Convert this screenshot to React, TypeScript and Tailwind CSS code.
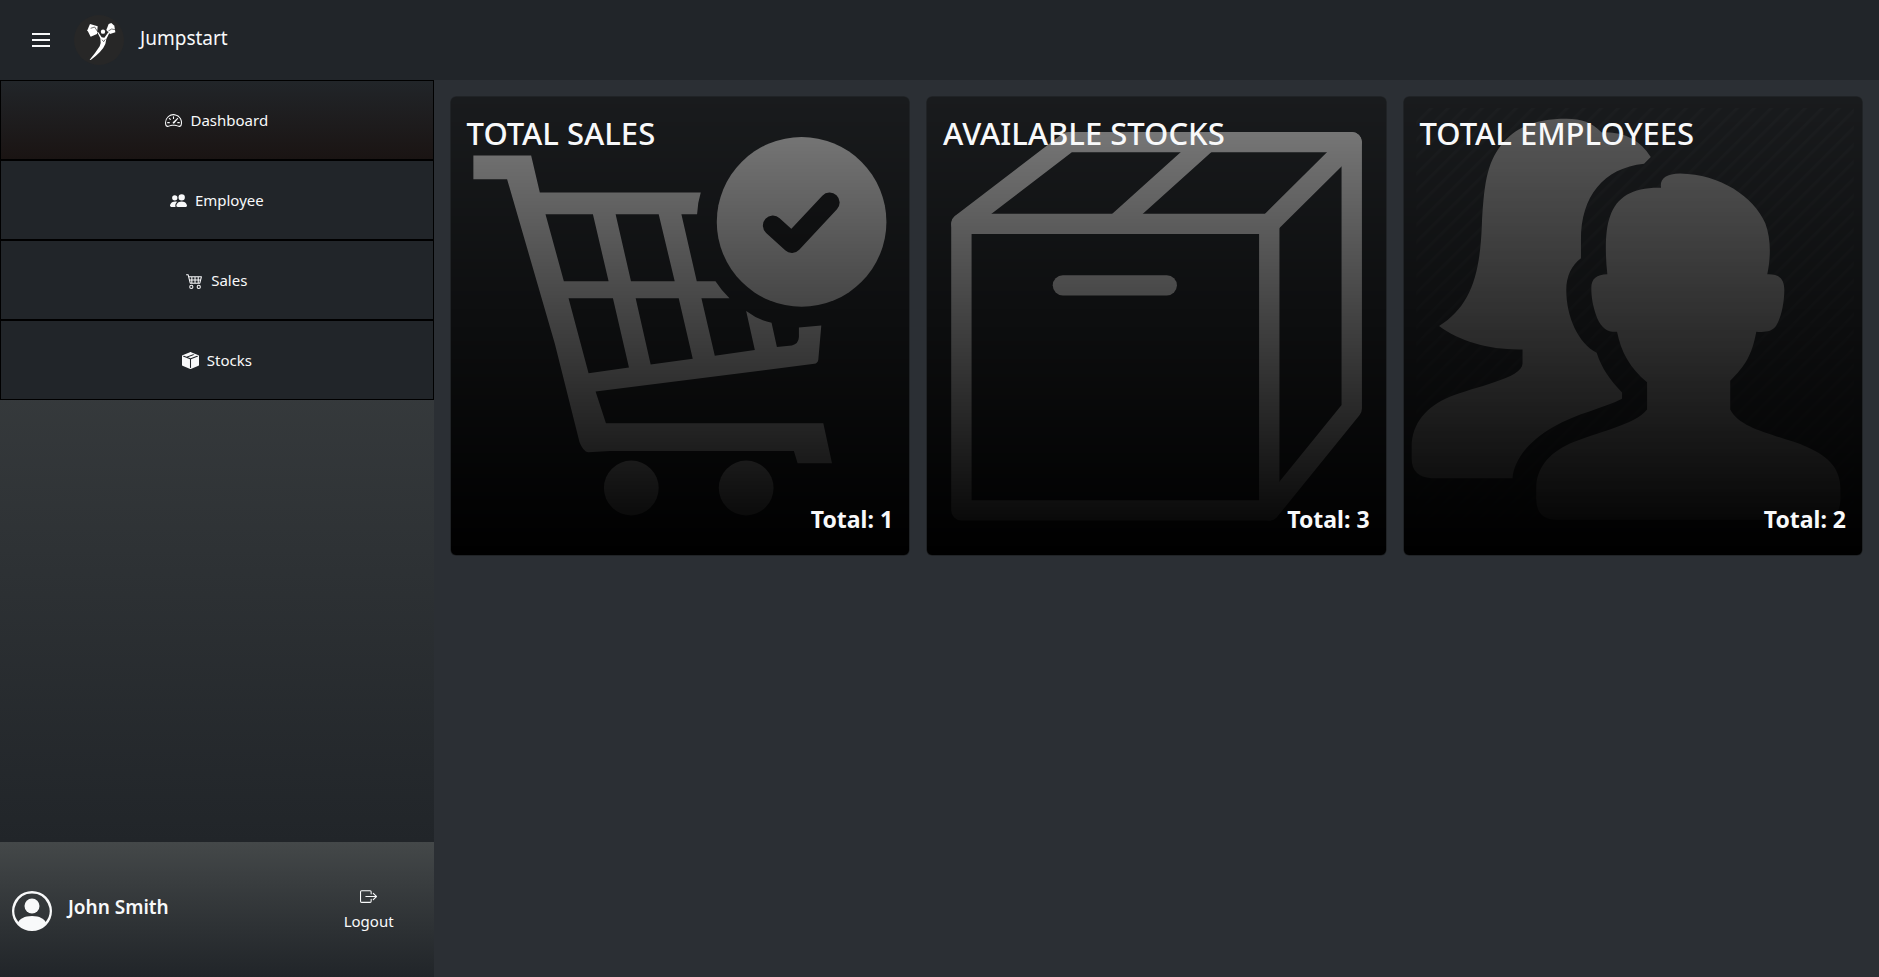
import type { ComponentType, ReactNode } from "react";
import {
  BsBoxArrowRight,
  BsBoxSeamFill,
  BsCart4,
  BsPeopleFill,
  BsPersonCircle,
  BsSpeedometer2,
} from "react-icons/bs";

type IconType = ComponentType<{ className?: string }>;

const navItems: { label: string; Icon: IconType; active?: boolean }[] = [
  { label: "Dashboard", Icon: BsSpeedometer2, active: true },
  { label: "Employee", Icon: BsPeopleFill },
  { label: "Sales", Icon: BsCart4 },
  { label: "Stocks", Icon: BsBoxSeamFill },
];

function Logo() {
  return (
    <svg viewBox="0 0 150 150" className="size-[50px] shrink-0" aria-hidden="true">
      <circle cx="75" cy="75" r="75" fill="#272727" />
      <g fill="#ffffff">
        <path d="M48 27 L71 34 L69 57 L50 65 L40 46 Z" />
        <path d="M104 27 L112 24 L121 32 L124 52 L108 57 L97 45 Z" />
        <circle cx="87" cy="50" r="6.500" />
        <path d="M69 50 L73 52 L83 67 L91 68 L103 52 L106 54 L97 72 L94 87 Q86 108 50 135 L47 134 Q66 112 77 94 Q82 84 79 70 Z" />
      </g>
      <path
        d="M50 40 L62 36 L71 50 M103 48 L113 42 L123 44 M84 74 L89 80 L94 73"
        fill="none"
        stroke="#272727"
        strokeWidth="2"
      />
    </svg>
  );
}

function CartArt() {
  return (
    <svg viewBox="31 48 1379 1379" className="size-full" aria-hidden="true">
      <path
        fill="#ffffff"
        fillRule="evenodd"
        d="M101 226 H274 L300 337 H782 Q772 370 771 402 H724 L770 603 H826 Q845 632 868 654 H784 L824 826 L944 809 L918 692 Q955 720 994 727 L1010 800 L1055 795 Q1075 791 1076 770 V741 L1143 735 L1134 838 Q1132 849 1122 850 L467 933 L498 1028 H1149 L1175 1148 H1072 L1061 1111 H510 L445 1115 Q430 1113 419 1085 L345 790 L202 297 H101 Z M317 402 H459 L506 603 H372 Z M527 402 H656 L704 603 H573 Z M386 654 H519 L567 861 L446 878 Z M587 654 H716 L758 835 L632 852 Z"
      />
      <circle cx="574" cy="1222" r="82" fill="#ffffff" />
      <circle cx="918" cy="1222" r="82" fill="#ffffff" />
      <circle cx="1084" cy="425" r="254" fill="#ffffff" />
      <path
        d="M998 436 L1055 488 L1168 367"
        fill="none"
        stroke="#2a2c2f"
        strokeWidth="60"
        strokeLinecap="round"
        strokeLinejoin="round"
      />
    </svg>
  );
}

function BoxArt() {
  return (
    <svg viewBox="35 49 1379 1379" className="size-full" aria-hidden="true">
      <g fill="none" stroke="#ffffff" strokeWidth="61" strokeLinejoin="round" strokeLinecap="round">
        <path d="M141 432 H1063 V1290 H141 Z" />
        <path d="M141 432 L461 187 H1310 V985 L1063 1290" />
        <path d="M1063 432 L1310 187" />
        <path d="M605 432 L877 187" />
        <path d="M445 616 H756" />
      </g>
    </svg>
  );
}

function PeopleArt() {
  return (
    <svg viewBox="40 49 1379 1379" className="size-full" aria-hidden="true">
      <defs>
        <pattern id="stripes" width="36" height="36" patternUnits="userSpaceOnUse" patternTransform="rotate(45)">
          <rect width="9" height="36" fill="#ffffff" fillOpacity="0.035" />
        </pattern>
      </defs>
      <rect x="80" y="85" width="1310" height="1245" fill="url(#stripes)" />
      <path
        d="M148 738 C240 680 270 590 276 440 C282 320 290 250 335 195 C380 140 440 117 530 117 C575 117 605 128 635 158 C700 155 750 180 782 232 L762 252 C640 265 573 350 573 480 V535 C545 555 529 590 529 630 C529 710 565 790 620 818 C635 865 660 900 696 937 V956 C640 985 560 1000 490 1040 C415 1083 372 1140 368 1194 H125 Q66 1190 66 1135 V1100 C66 1030 110 980 180 950 C250 920 398 895 398 850 V808 C300 810 210 785 148 738 Z"
        fill="#b7b7b7"
      />
      <path
        d="M813 324 C808 300 825 281 870 281 C990 283 1090 350 1125 430 C1142 475 1142 530 1131 583 C1165 582 1182 595 1182 630 C1182 670 1172 715 1157 738 C1145 755 1125 757 1098 755 C1085 825 1065 857 1020 902 V988 C1050 1050 1170 1065 1250 1100 C1320 1130 1350 1170 1350 1225 V1260 Q1348 1318 1290 1318 H500 Q439 1318 439 1255 V1225 C439 1165 475 1120 540 1090 C620 1055 735 1035 771 988 V906 C720 865 693 815 681 755 C655 757 635 745 622 715 C608 680 604 650 604 625 C604 595 620 584 652 583 C645 520 645 450 660 410 C680 350 730 322 813 324 Z"
        fill="#b7b7b7"
      />
    </svg>
  );
}

function StatCard({ title, total, art }: { title: string; total: number; art: ReactNode }) {
  return (
    <article className="relative isolate flex aspect-square flex-col justify-between overflow-hidden rounded-md bg-[#32363a] p-[17px] text-[#f8f9fa]">
      <div className="absolute inset-0 -z-10">{art}</div>
      <div className="absolute inset-0 -z-10 rounded-md border border-[#202326] bg-linear-to-b from-black/50 to-black" />
      <h2 className="text-[31px] leading-10 font-medium">{title}</h2>
      <p className="text-right text-[23px] leading-10 font-bold">Total: {total}</p>
    </article>
  );
}

export default function App() {
  return (
    <div className="flex min-h-screen flex-col bg-[#2b2f34] font-['Noto_Sans','Open_Sans',sans-serif] text-[15px] leading-6 text-[#f8f9fa]">
      <header className="flex h-20 items-center bg-[#212529] pl-8">
        <button type="button" aria-label="Toggle menu">
          <svg viewBox="0 0 18 14" className="h-[14px] w-[18px]" aria-hidden="true">
            <path d="M0 1 H18 M0 7 H18 M0 13 H18" stroke="#f8f9fa" strokeWidth="2" />
          </svg>
        </button>
        <a href="#" className="ml-6 flex items-center gap-4">
          <Logo />
          <span className="pb-1 text-[19px]">Jumpstart</span>
        </a>
      </header>
      <div className="grid flex-1 grid-cols-[3fr_10fr]">
        <aside className="flex flex-col">
          <nav className="flex-1 bg-linear-to-b from-[#444849] to-[#212529]">
            {navItems.map(({ label, Icon, active }) => (
              <a
                key={label}
                href="#"
                className={
                  active
                    ? "flex h-20 items-center justify-center gap-2 border border-black bg-linear-to-b from-[#212529] to-[#1a1413]"
                    : "flex h-20 items-center justify-center gap-2 border border-black bg-[#212529]"
                }
              >
                <Icon className="size-[17px]" />
                <span>{label}</span>
              </a>
            ))}
          </nav>
          <div className="flex h-[135px] items-center justify-between bg-linear-to-b from-[#444849] to-[#212529] pt-0.5 pr-10 pl-3">
            <div className="flex items-center gap-4">
              <BsPersonCircle className="size-10" />
              <span className="pb-2 text-[19px] font-semibold">John Smith</span>
            </div>
            <button type="button" className="flex flex-col items-center gap-1">
              <BsBoxArrowRight className="size-[17px]" />
              <span>Logout</span>
            </button>
          </div>
        </aside>
        <main className="grid grid-cols-3 content-start gap-4 p-4">
          <StatCard title="TOTAL SALES" total={1} art={<CartArt />} />
          <StatCard title="AVAILABLE STOCKS" total={3} art={<BoxArt />} />
          <StatCard title="TOTAL EMPLOYEES" total={2} art={<PeopleArt />} />
        </main>
      </div>
    </div>
  );
}
